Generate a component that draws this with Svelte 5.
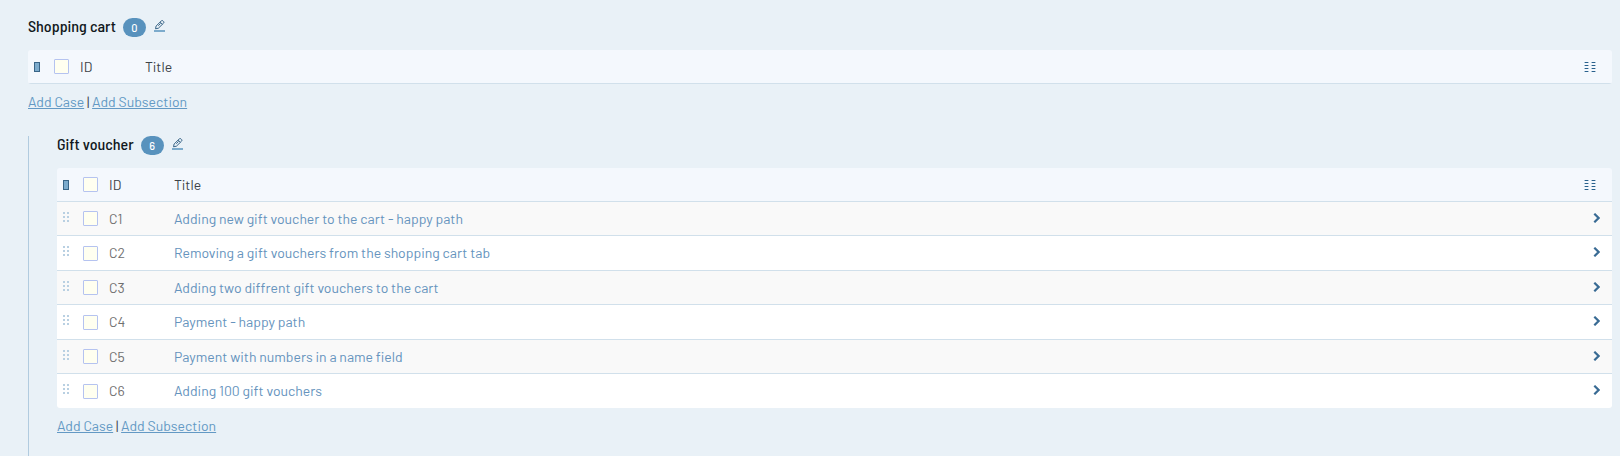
<script>
  const cases = [
    { id: 'C1', title: 'Adding new gift voucher to the cart - happy path' },
    { id: 'C2', title: 'Removing a gift vouchers from the shopping cart tab' },
    { id: 'C3', title: 'Adding two diffrent gift vouchers to the cart' },
    { id: 'C4', title: 'Payment - happy path' },
    { id: 'C5', title: 'Payment with numbers in a name field' },
    { id: 'C6', title: 'Adding 100 gift vouchers' },
  ];
</script>

{#snippet section(name, rows)}
  <header class="heading">
    <h2>{name}</h2>
    <span class="badge">{rows.length}</span>
    <button class="icon edit" type="button" aria-label="Edit section">
      <svg width="12" height="12" viewBox="0 0 12 12" fill="none">
        <path d="M1.5 8.8 2.1 6 7.3.9Q8.2.2 9 .9L9.6 1.5Q10.3 2.3 9.6 3.1L4.4 8.2 1.5 8.8ZM6.2 2.1 8.4 4.3M4.3 5.7 6.6 3.4" stroke="#396587" />
        <path d="M0 11H11" stroke="#7cabcc" stroke-width="2" />
      </svg>
    </button>
  </header>
  <table>
    <thead>
      <tr>
        <th class="grip">
          <svg width="6" height="10" viewBox="0 0 6 10"><rect x=".5" y=".5" width="5" height="9" fill="#7cabcc" stroke="#396587" /></svg>
        </th>
        <th class="pick"><input type="checkbox" aria-label="Select all cases in {name}" /></th>
        <th class="id">ID</th>
        <th>Title</th>
        <th class="tools">
          <button class="icon" type="button" aria-label="Select columns">
            <svg class="columns" width="12" height="10" viewBox="0 0 12 10">
              <path d="M0 .5H5M7 .5H12M0 3.5H5M7 3.5H12M0 6.5H5M7 6.5H12M0 9.5H5M7 9.5H12" stroke="#a3bdd0" />
              <path d="M1 .5H4M8 .5H11M1 3.5H4M8 3.5H11M1 6.5H4M8 6.5H11M1 9.5H4M8 9.5H11" stroke="#28608c" />
            </svg>
          </button>
        </th>
      </tr>
    </thead>
    {#if rows.length}
      <tbody>
        {#each rows as row}
          <tr>
            <td class="grip">
              <svg class="dots" width="6" height="10" viewBox="0 0 6 10" fill="#b9d0e2">
                <path d="M0 0h2v2H0zM4 0h2v2H4zM0 4h2v2H0zM4 4h2v2H4zM0 8h2v2H0zM4 8h2v2H4z" />
              </svg>
            </td>
            <td class="pick"><input type="checkbox" aria-label="Select {row.id}" /></td>
            <td class="id">{row.id}</td>
            <td><a class="title" href="#{row.id}">{row.title}</a></td>
            <td class="tools">
              <button class="icon" type="button" aria-label="Open {row.id}">
                <svg class="arrow" width="7" height="10" viewBox="0 0 7 10" fill="none">
                  <path d="M1.3.7 5.6 5 1.3 9.3" stroke="#396b94" stroke-width="2.2" />
                </svg>
              </button>
            </td>
          </tr>
        {/each}
      </tbody>
    {/if}
  </table>
  <nav><a href="#add-case">Add Case</a> | <a href="#add-subsection">Add Subsection</a></nav>
{/snippet}

<main>
  <section>{@render section('Shopping cart', [])}</section>
  <section class="nested">{@render section('Gift voucher', cases)}</section>
</main>

<style>
  :global(body) {
    margin: 0;
    background: #e9f1f7;
  }
  main {
    padding: 18px 8px 0 28px;
    color: #3c4248;
    font: 14px/20px Barlow, Roboto, sans-serif;
  }
  .heading {
    display: flex;
    align-items: center;
    height: 19px;
    margin-bottom: 13px;
  }
  h2 {
    margin: 0;
    padding-bottom: 4px;
    color: #111820;
    font-family: "Barlow Semi Condensed", Barlow, Roboto, sans-serif;
    font-size: 16px;
    font-weight: 500;
    line-height: 18px;
  }
  .badge {
    min-width: 23px;
    margin: 0 8px 0 7px;
    border-radius: 10px;
    background: #5892bd;
    color: #fff;
    font-size: 11px;
    font-weight: 500;
    line-height: 19px;
    text-align: center;
  }
  .icon {
    padding: 0;
    border: 0;
    background: none;
    cursor: pointer;
  }
  svg {
    display: block;
  }
  .edit {
    padding-bottom: 4px;
  }
  table {
    width: 100%;
    table-layout: fixed;
    border-collapse: separate;
    border-spacing: 0;
    border-radius: 3px;
    overflow: hidden;
  }
  th,
  td {
    box-sizing: border-box;
    height: 34px;
    padding: 0;
    border-bottom: 1px solid #d1e0eb;
    font-weight: 400;
    text-align: left;
    vertical-align: middle;
  }
  th {
    background: #f4f8fd;
  }
  td {
    background: #f9f9f9;
    color: #707070;
  }
  tr:nth-child(even) td {
    height: 35px;
    background: #fff;
  }
  tbody tr:last-child td {
    height: 34px;
    border-bottom: 0;
  }
  .grip {
    width: 26px;
    padding-left: 6px;
    box-sizing: border-box;
  }
  .dots {
    margin-bottom: 4px;
  }
  .pick {
    width: 26px;
  }
  .id {
    width: 65px;
  }
  .tools {
    width: 40px;
    padding-right: 12px;
  }
  .tools .icon {
    display: block;
    margin-left: auto;
  }
  .columns {
    margin-right: 4px;
  }
  .arrow {
    margin-bottom: 2px;
  }
  input {
    display: block;
    box-sizing: border-box;
    width: 15px;
    height: 15px;
    margin: 0;
    border: 1px solid #b5c3f0;
    border-radius: 1px;
    background: #fffff0;
    appearance: none;
  }
  input:checked {
    background: #5892bd;
  }
  a {
    color: #6399c4;
    text-underline-offset: 1px;
  }
  .title {
    color: #6593bd;
    text-decoration: none;
  }
  nav {
    margin-top: 8px;
  }
  .nested {
    min-height: 320px;
    margin-top: 24px;
    padding-left: 28px;
    border-left: 1px solid #b1cbdf;
  }
</style>
